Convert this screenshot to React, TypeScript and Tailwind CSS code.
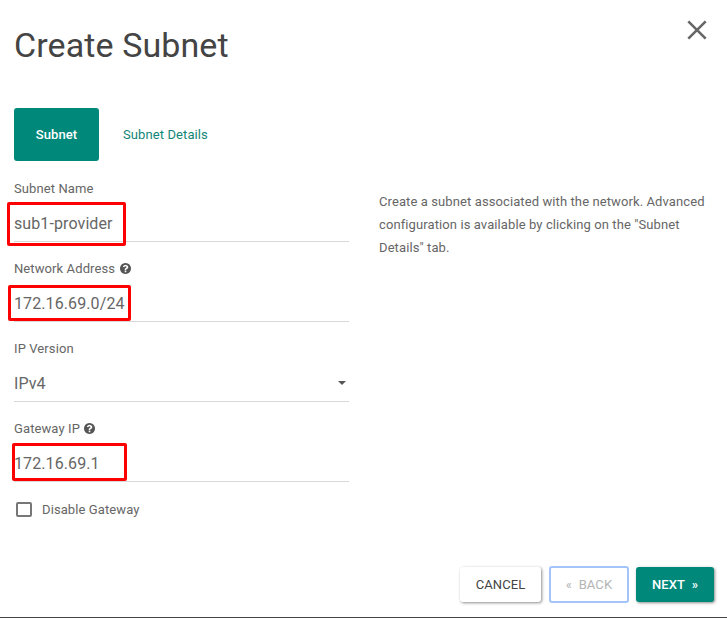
import type { ReactNode } from "react";

function HelpIcon() {
  return (
    <svg viewBox="0 0 1536 1536" className="ml-[4.500px] h-[11px] w-[11px] shrink-0" fill="#555">
      <path d="M880 1248v-160q0-14-9-23t-23-9H688q-14 0-23 9t-9 23v160q0 14 9 23t23 9h160q14 0 23-9t9-23zm272-672q0-88-55.500-163T958 297t-170-41q-243 0-371 213-15 24 8 42l112 90q7 6 19 6 16 0 25-12 63-78 96-102 34-24 86-24 48 0 95.500 31t47.500 74q0 43-20 66t-68 45q-63 28-115.500 86.500T656 892v36q0 14 9 23t23 9h160q14 0 23-9t9-23q0-19 21.500-49.500T972 829q32-18 49-28.500t46-35 44.500-48 28-60.500 12.500-81zm384 192q0 209-103 385.500T1153.500 1433 768 1536t-385.500-103T103 1153.500 0 768t103-385.500T382.500 103 768 0t385.500 103T1433 382.500 1536 768z" />
    </svg>
  );
}

function Field({ label, value, help, mark, children }: {
  label: string;
  value: string;
  help?: boolean;
  mark?: string;
  children?: ReactNode;
}) {
  return (
    <div className="relative h-20">
      <div className="flex h-[23px] items-center">
        {label}
        {help && <HelpIcon />}
      </div>
      <div className="mt-[5px] flex h-[37px] items-center justify-between border-b border-[#d9d9d9] text-[16px]">
        <span>{value}</span>
        {children}
      </div>
      {mark && <div className={`absolute rounded-[2px] border-3 border-[#fd0000] ${mark}`} />}
    </div>
  );
}

export default function App() {
  return (
    <div className="flex h-[618px] w-[727px] flex-col border-b border-[#444] bg-white pl-[14px] font-['Roboto',sans-serif] text-[13px] leading-[23px] tracking-[0.1px] text-[#666]">
      <header className="flex h-[108px] justify-between pr-[20px]">
        <h1 className="mt-[23px] text-[34px] leading-[44px] text-[#444]">Create Subnet</h1>
        <svg viewBox="0 0 20 20" className="mt-[20px] h-5 w-5" stroke="#666" strokeWidth="2.6">
          <path d="M1.300 1.300 18.700 18.700M18.700 1.300 1.300 18.700" />
        </svg>
      </header>
      <nav className="flex h-[53px] items-center">
        <button className="h-[53px] w-[85px] rounded-[3px] bg-[#00897b] font-medium text-white">Subnet</button>
        <button className="ml-6 text-[#128577]">Subnet Details</button>
      </nav>
      <main className="mt-4 flex h-[389px]">
        <form className="w-[335px]">
          <Field label="Subnet Name" value="sub1-provider" mark="left-[-7px] top-[25px] h-[44px] w-[119px]" />
          <Field label="Network Address" value="172.16.69.0/24" help mark="left-[-6px] top-[28px] h-[36px] w-[123px]" />
          <Field label="IP Version" value="IPv4">
            <svg viewBox="0 0 8 4" className="mr-[3px] h-1 w-2" fill="#555">
              <path d="M0 0h8L4 4z" />
            </svg>
          </Field>
          <Field label="Gateway IP" value="172.16.69.1" help mark="left-[-2px] top-[26px] h-[38px] w-[115px]" />
          <label className="mt-px flex items-center">
            <span className="mb-px ml-[2px] mr-[10px] h-[15px] w-4 rounded-[2px] border-2 border-[#777]" />
            Disable Gateway
          </label>
        </form>
        <p className="ml-[30px] mt-[13px] w-[334px]">
          Create a subnet associated with the network. Advanced configuration is available by clicking on the "Subnet Details" tab.
        </p>
      </main>
      <footer className="flex items-center justify-end pr-[13px]">
        <button className="h-[35px] w-[81px] rounded-[3px] text-[#444] shadow-[1px_1px_3px_rgba(0,0,0,0.45)]">CANCEL</button>
        <button className="ml-2 h-[37px] w-[80px] rounded-[3px] border-2 border-[#a3c3fb] text-[#b4b4b4]">«&nbsp; BACK</button>
        <button className="ml-[7px] h-[35px] w-[78px] rounded-[3px] bg-[#00897b] font-medium text-white shadow-[1px_1px_3px_rgba(0,0,0,0.45)]">NEXT&nbsp; »</button>
      </footer>
    </div>
  );
}
